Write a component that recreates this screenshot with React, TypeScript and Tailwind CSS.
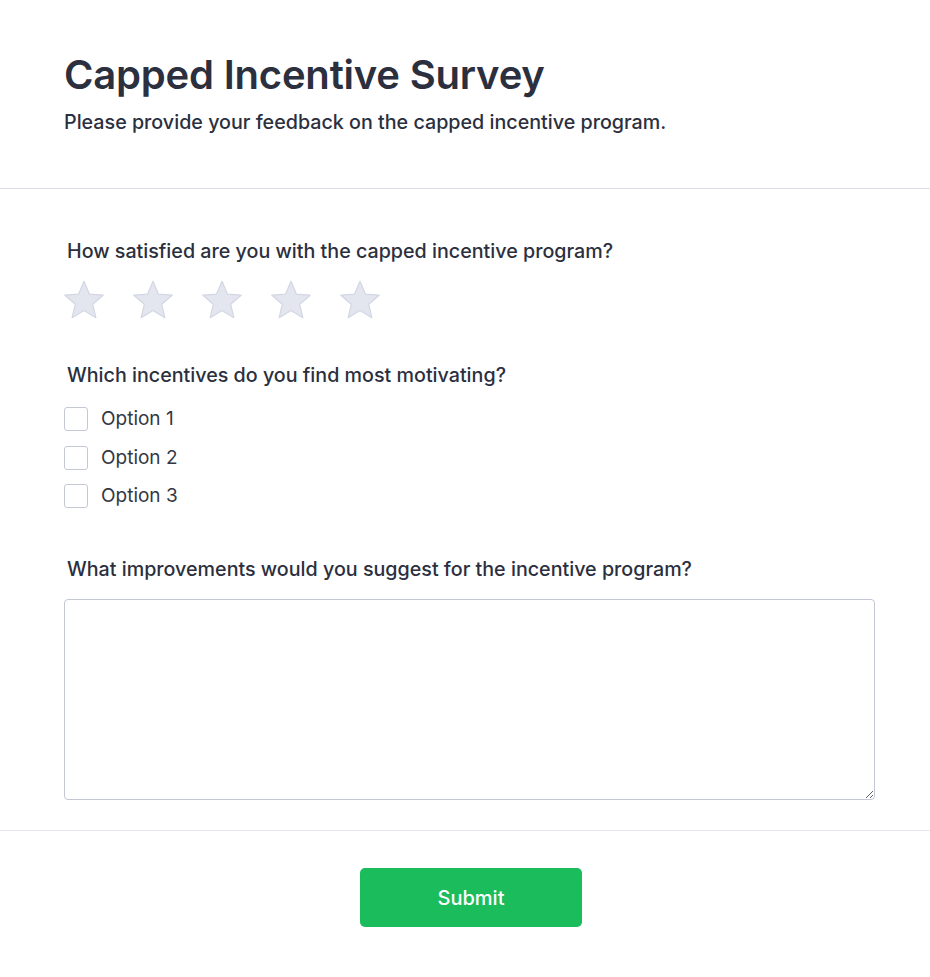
import { useState } from 'react';

function Star({ active }: { active: boolean }) {
  return (
    <svg width="42" height="42" viewBox="0 0 24 24" className="block">
      <path
        d="M12 1.3L15.06 8.59L22.94 9.25L16.95 14.41L18.76 22.1L12 18L5.24 22.1L7.05 14.41L1.06 9.25L8.94 8.59Z"
        fill={active ? '#facc15' : '#e3e6ef'}
        stroke={active ? '#eab308' : '#d3d7e2'}
        strokeWidth="0.7"
        strokeLinejoin="round"
      />
    </svg>
  );
}

export default function App() {
  const [rating, setRating] = useState(0);
  const [checked, setChecked] = useState<boolean[]>([false, false, false]);

  return (
    <div className="min-h-screen bg-white text-[#2b2f3e]" style={{ fontFamily: 'Inter, "Noto Sans", sans-serif' }}>
      {/* Header */}
      <header className="px-[64px] pt-[51px] pb-[52px] border-b border-[#dcdde9]">
        <h1 className="text-[40px] leading-[48px] font-semibold tracking-[-0.2px]">Capped Incentive Survey</h1>
        <p className="mt-[9px] text-[19.7px] leading-[28px] font-medium">
          Please provide your feedback on the capped incentive program.
        </p>
      </header>

      {/* Questions */}
      <section className="px-[64px] pt-[48px] pb-[30px] border-b border-[#e6e7ef]">
        <p className="pl-[3px] text-[19.7px] leading-[28px] font-medium">
          How satisfied are you with the capped incentive program?
        </p>
        <div className="mt-[14px] -ml-[1px] flex gap-[27px]">
          {[1, 2, 3, 4, 5].map(i => (
            <button key={i} onClick={() => setRating(i)} className="p-0">
              <Star active={i <= rating} />
            </button>
          ))}
        </div>

        <p className="mt-[40px] pl-[3px] text-[19.7px] leading-[28px] font-medium">
          Which incentives do you find most motivating?
        </p>
        <div className="mt-[18px] flex flex-col gap-[14.5px]">
          {['Option 1', 'Option 2', 'Option 3'].map((opt, i) => (
            <label key={opt} className="flex items-center gap-[13px] cursor-pointer">
              <input
                type="checkbox"
                checked={checked[i]}
                onChange={() => setChecked(c => c.map((v, j) => (j === i ? !v : v)))}
                className="appearance-none w-[24px] h-[24px] rounded-[3px] border border-[#c5c9d6] bg-white checked:bg-[#1abc5c] checked:border-[#1abc5c]"
              />
              <span className="text-[19px] leading-[24px] text-[#333744]">{opt}</span>
            </label>
          ))}
        </div>

        <p className="mt-[47px] pl-[3px] text-[19.7px] leading-[28px] font-medium">
          What improvements would you suggest for the incentive program?
        </p>
        <textarea className="mt-[16px] block w-[811px] h-[201px] rounded-[4px] border border-[#c3c7d3] p-3 text-[16px] outline-none" />
      </section>

      {/* Footer */}
      <footer className="flex justify-center pl-[12px] pt-[37px] pb-[50px]">
        <button className="w-[222px] h-[59px] rounded-[5px] bg-[#1abc5c] text-white text-[20px] font-medium">
          Submit
        </button>
      </footer>
    </div>
  );
}
